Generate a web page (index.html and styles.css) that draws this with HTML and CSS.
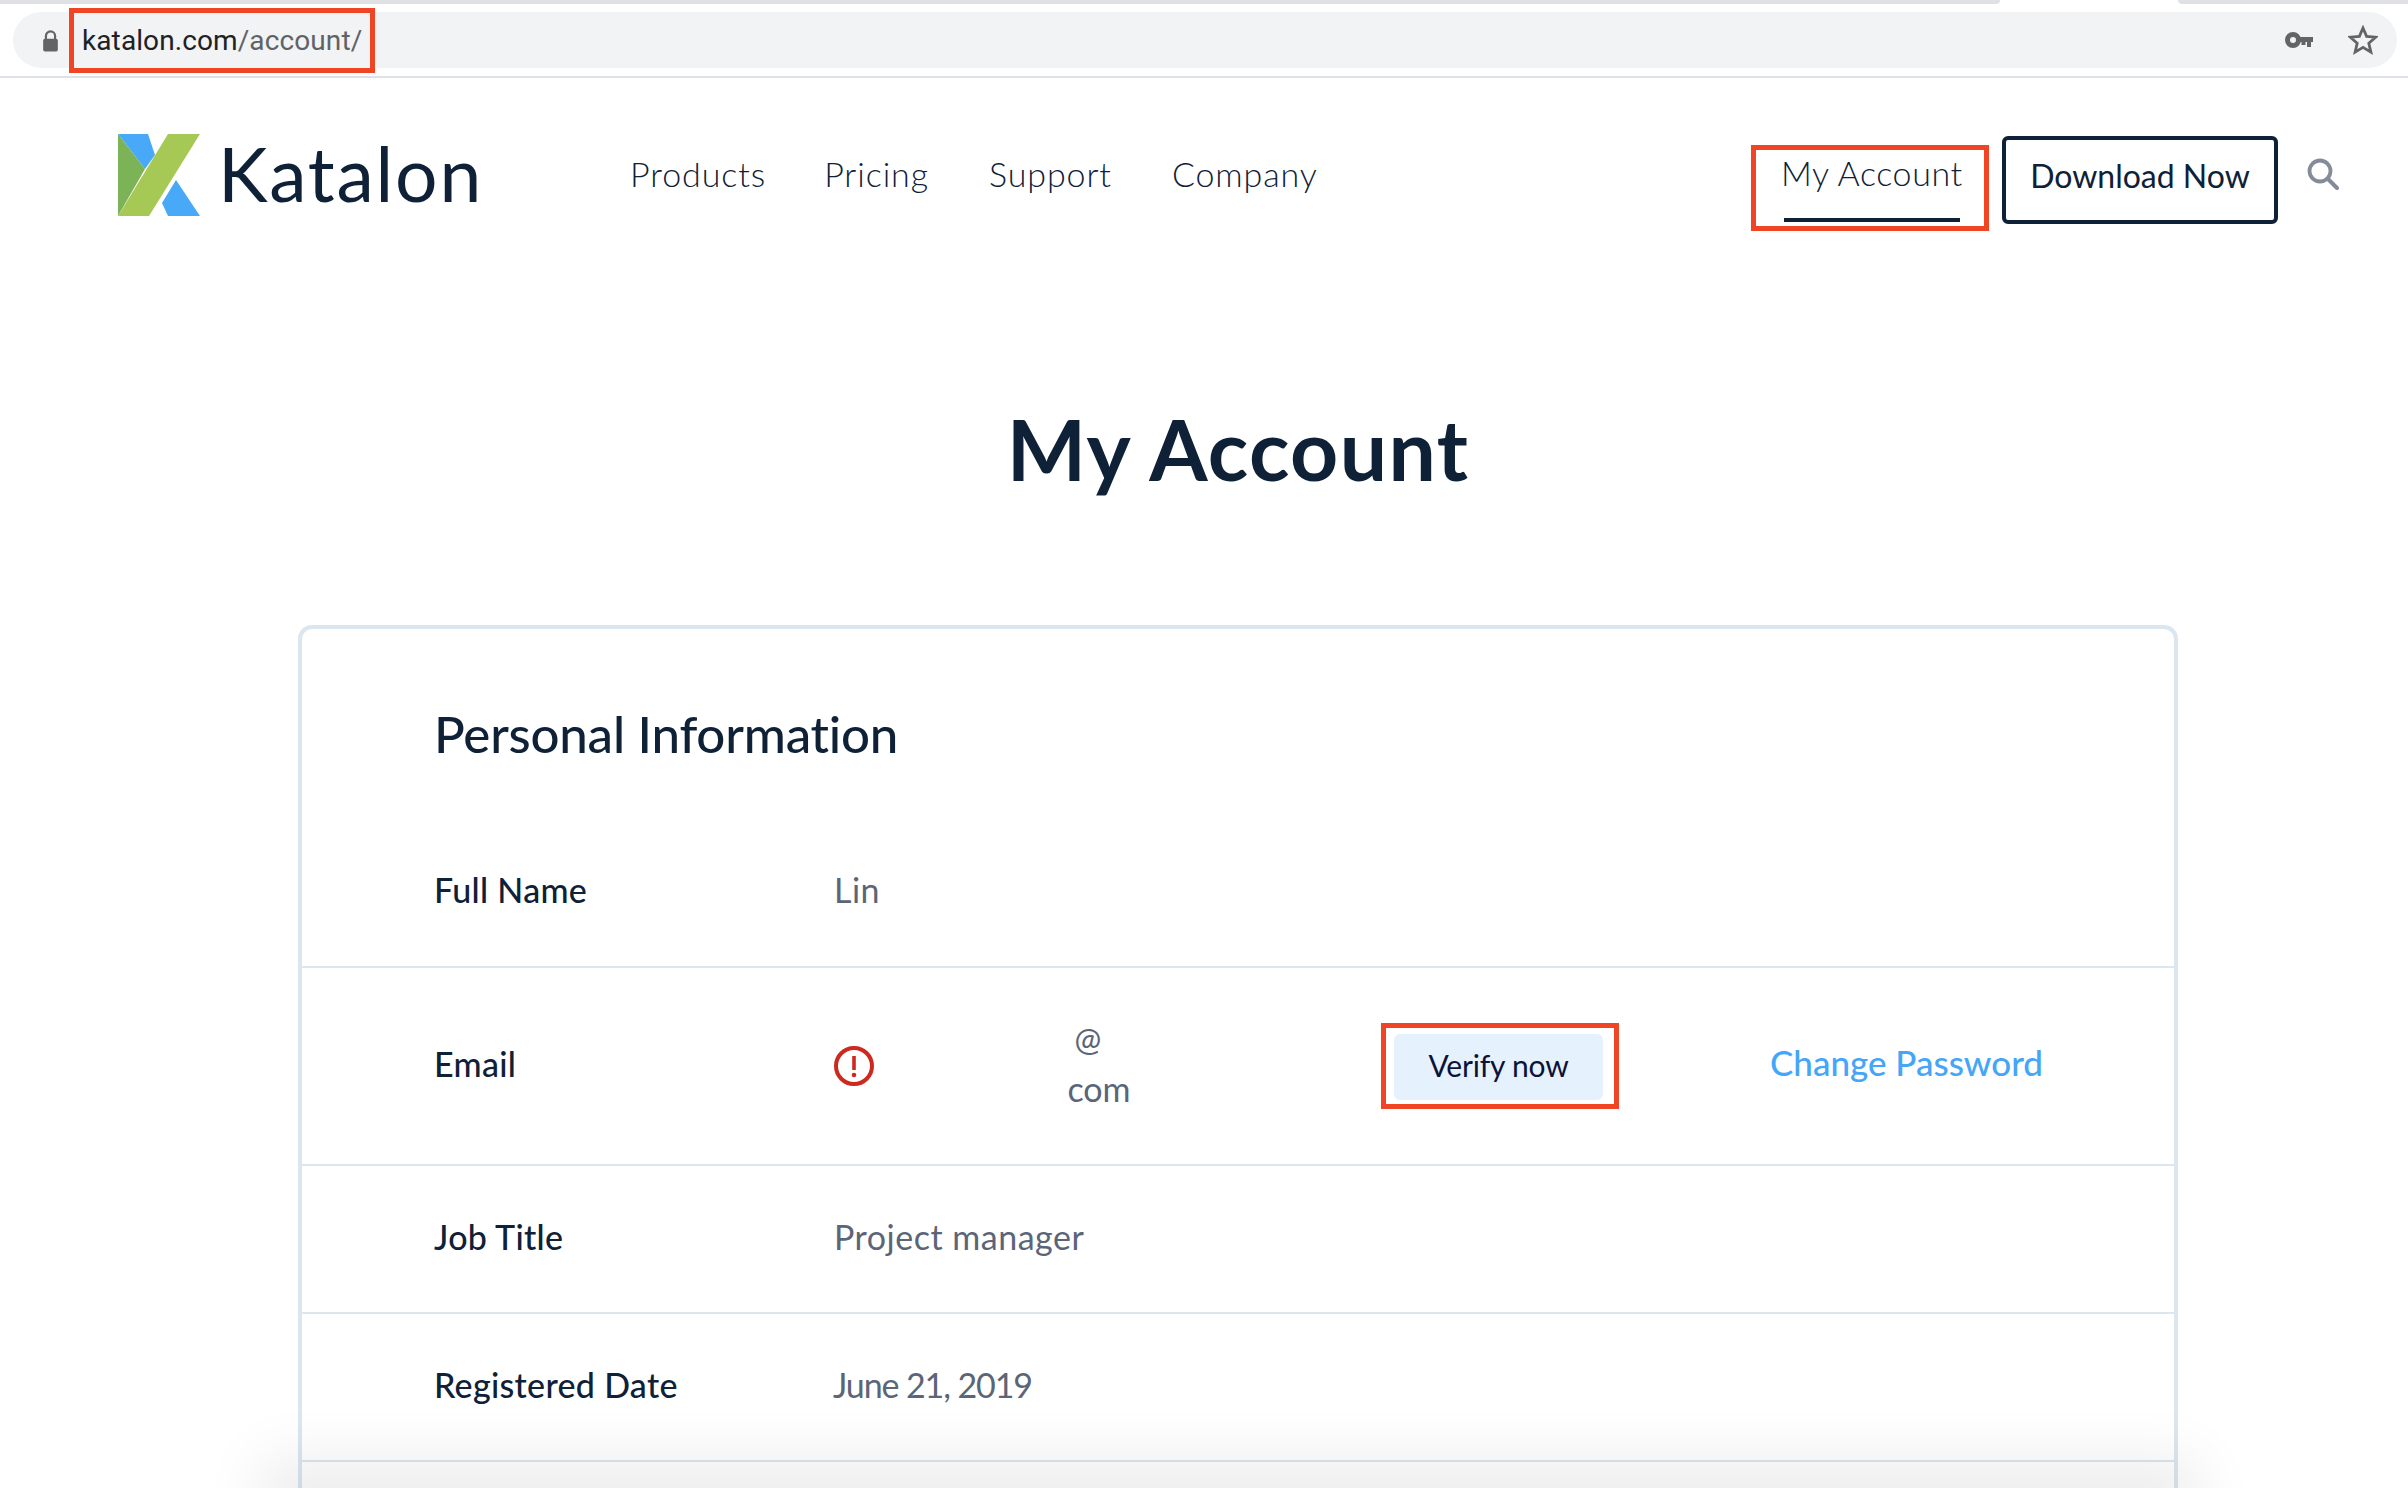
FILE: index.html
```html
<!DOCTYPE html>
<html lang="en">
<head>
<meta charset="utf-8">
<title>My Account | Katalon</title>
<link rel="stylesheet" href="styles.css">
</head>
<body>
<div class="browser">
  <div class="tabstrip"><span class="tab-left"></span><span class="tab-right"></span></div>
  <div class="toolbar">
    <div class="omnibox">
      <svg class="lock" viewBox="0 0 18 24"><path d="M4 10V6.500a5 5 0 0 1 10 0V10" fill="none" stroke="#636466" stroke-width="2.400"/><rect x="1" y="9.500" width="16" height="14" rx="2" fill="#636466"/></svg>
      <div class="url-mark"><span class="url-host">katalon.com</span><span class="url-path">/account/</span></div>
      <div class="omni-actions">
        <svg class="key" viewBox="0 0 28 16"><circle cx="8" cy="8" r="5.500" fill="none" stroke="#636466" stroke-width="5"/><path d="M12 5h16v5h-2v5h-4v-5h-1.500v3h-4v-3H12z" fill="#636466"/></svg>
        <svg class="star" viewBox="0 0 30 30"><path d="M15 3l3.600 8.400 9.100.8-6.900 6 2.100 8.900L15 22.400l-7.900 4.700 2.100-8.900-6.900-6 9.100-.8z" fill="none" stroke="#636466" stroke-width="2.800" stroke-linejoin="miter"/></svg>
      </div>
    </div>
  </div>
</div>

<header class="site-header">
  <a class="logo">
    <svg class="logo-mark" viewBox="0 0 82 82"><path d="M0 0h30l7 21-10 14z" fill="#48a9f8"/><path d="M0 0l27 35L0 82z" fill="#7cb356"/><path d="M50 0h32L31 82H0z" fill="#a6c955"/><path d="M58 46l24 36H50l-6-13z" fill="#48a9f8"/></svg>
    <span class="logo-text">Katalon</span>
  </a>
  <nav class="main-nav">
    <a>Products</a><a>Pricing</a><a>Support</a><a>Company</a>
  </nav>
  <div class="header-actions">
    <div class="account-mark"><a class="account-link">My Account</a></div>
    <a class="download-btn">Download Now</a>
    <svg class="search" viewBox="0 0 32 32"><circle cx="13" cy="13" r="10.500" fill="none" stroke="#858c99" stroke-width="3.800"/><path d="M21 21l9 9" stroke="#858c99" stroke-width="4" stroke-linecap="round"/></svg>
  </div>
</header>

<main class="content">
  <h1 class="page-title">My Account</h1>
  <section class="card">
    <h2 class="card-title">Personal Information</h2>
    <div class="row row-name"><span class="label">Full Name</span><span class="value">Lin</span></div>
    <div class="row row-email">
      <span class="label">Email</span>
      <div class="email-value">
        <svg class="alert" viewBox="0 0 40 40"><circle cx="20" cy="20" r="18" fill="none" stroke="#cc2a1e" stroke-width="4"/><path d="M20 10v14" stroke="#cc2a1e" stroke-width="3.600"/><circle cx="20" cy="29" r="2.300" fill="#cc2a1e"/></svg>
        <div class="email-text"><span class="email-at">@</span><span>com</span></div>
      </div>
      <div class="verify-mark"><a class="verify-btn">Verify now</a></div>
      <a class="change-link">Change Password</a>
    </div>
    <div class="row row-plain"><span class="label">Job Title</span><span class="value">Project manager</span></div>
    <div class="row row-plain"><span class="label">Registered Date</span><span class="value value-date">June 21, 2019</span></div>
    <div class="row row-last"></div>
  </section>
</main>
<div class="bottom-shade"></div>
</body>
</html>
```
FILE: styles.css
```css
* { box-sizing: border-box; }
html, body { margin: 0; height: 1488px; overflow: hidden; background: #fff; }
body { position: relative; font-family: "Lato", "Liberation Sans", sans-serif; color: #0f2137; }

.browser { height: 78px; border-bottom: 2px solid #dee1e6; }
.tabstrip { height: 4px; display: flex; justify-content: space-between; }
.tab-left { width: 2000px; background: #dfe1e5; border-bottom-right-radius: 6px; }
.tab-right { width: 230px; background: #dfe1e5; border-bottom-left-radius: 6px; }
.toolbar { padding: 8px 11px 0 13px; }
.omnibox { height: 56px; border-radius: 28px; background: #f1f3f4; display: flex; align-items: center; padding-left: 29px; }
.lock { width: 17px; height: 22px; flex: none; margin-top: 1px; }
.url-mark { height: 65px; margin-left: 10px; width: 306px; border: 5px solid #f04524; display: flex; align-items: center; padding-left: 8px; font-family: "Roboto", sans-serif; font-size: 28px; letter-spacing: 0.1px; white-space: nowrap; }
.url-host { color: #202124; }
.url-path { color: #5f6368; }
.omni-actions { margin-left: auto; display: flex; align-items: center; gap: 35px; padding-right: 19px; }
.key { width: 28px; height: 16px; }
.star { width: 30px; height: 30px; }

.site-header { height: 174px; padding: 0 69px 0 118px; display: flex; align-items: flex-start; }
.logo { display: flex; align-items: center; margin-top: 56px; height: 82px; }
.logo-mark { width: 82px; height: 82px; flex: none; }
.logo-text { margin: -5px 0 0 18px; font-size: 75px; line-height: 82px; letter-spacing: 1.800px; color: #0f2137; }
.main-nav { display: flex; gap: 60px; margin: 71px 0 0 147px; font-size: 34px; font-weight: 300; line-height: 50px; letter-spacing: 0.9px; }
.main-nav a:first-child { margin-right: -2px; }
.header-actions { margin-left: auto; display: flex; align-items: flex-start; }
.account-mark { width: 238px; height: 86px; margin-top: 67px; border: 5px solid #f04524; padding: 0 24px 0 28px; font-size: 34px; font-weight: 300; }
.account-link { display: block; height: 72px; line-height: 46px; text-indent: -3px; border-bottom: 4px solid #0f2137; white-space: nowrap; letter-spacing: 0.600px; }
.download-btn { margin: 58px 0 0 13px; width: 276px; height: 88px; padding-bottom: 10px; border: 4px solid #0f2137; border-radius: 6px; display: flex; align-items: center; justify-content: center; font-size: 32px; white-space: nowrap; }
.search { width: 32px; height: 32px; margin: 80px 0 0 29px; }

.content { display: flex; flex-direction: column; align-items: center; padding: 0 230px 0 298px; }
.page-title { margin: 0; height: 373px; padding-top: 99px; font-size: 84px; line-height: 196px; font-weight: 700; letter-spacing: 1.400px; }
.card { width: 100%; height: 900px; border: 4px solid #dce6ef; border-bottom: 0; border-radius: 14px 14px 0 0; display: flex; flex-direction: column; }
.card-title { margin: 0; height: 210px; padding: 66px 0 0 132px; font-size: 51px; line-height: 78px; font-weight: 500; letter-spacing: -0.2px; }
.row { display: flex; align-items: center; padding-left: 132px; font-size: 34px; border-bottom: 2px solid #dce6ef; flex: none; }
.row-name { height: 129px; padding-bottom: 26px; }
.row-email { height: 198px; }
.row-plain { height: 148px; padding-bottom: 5px; }
.row-last { border-bottom: 0; height: 60px; }
.label { width: 400px; flex: none; font-weight: 500; white-space: nowrap; letter-spacing: 0.3px; }
.row-email .label { padding-bottom: 5px; }
.value { color: #5b6577; white-space: nowrap; letter-spacing: 0.5px; }
.value-date { letter-spacing: -1.100px; margin-left: -1px; }
.email-value { width: 547px; flex: none; display: flex; align-items: center; }
.alert { width: 40px; height: 40px; flex: none; }
.email-text { margin-left: 180px; width: 90px; padding-bottom: 5px; display: flex; flex-direction: column; align-items: center; color: #5b6577; line-height: 50px; font-size: 34px; }
.email-at { padding-right: 22px; font-size: 32px; }
.verify-mark { width: 238px; height: 86px; border: 5px solid #f04524; padding: 6px 8px; flex: none; }
.verify-btn { display: flex; height: 66px; width: 209px; padding-bottom: 4px; background: #e5f1fd; border-radius: 6px; align-items: center; justify-content: center; font-size: 30px; letter-spacing: -0.2px; color: #0c1238; white-space: nowrap; }
.change-link { margin: -9px 0 0 151px; color: #45a5f8; font-size: 35px; font-weight: 500; white-space: nowrap; }

.bottom-shade { position: absolute; left: 290px; right: 240px; bottom: -30px; height: 30px; box-shadow: 0 0 60px 30px rgba(0,0,0,0.075); }
```
